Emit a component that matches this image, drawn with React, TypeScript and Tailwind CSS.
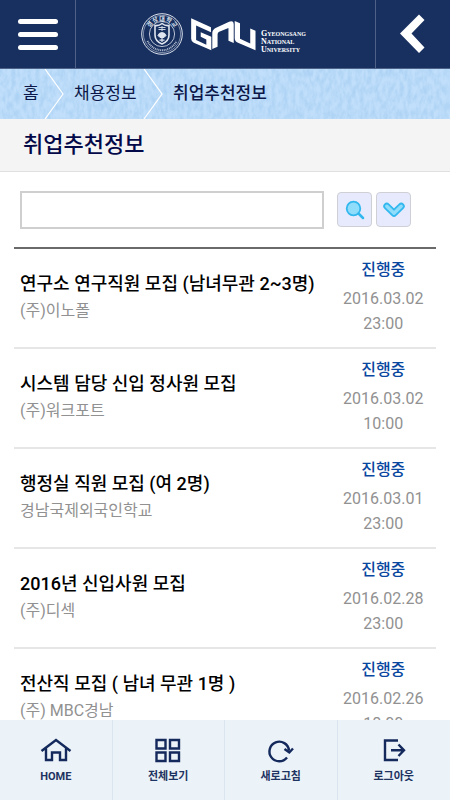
import React from "react";

type Job = { title: string; company: string; date: string; time: string };

const jobs: Job[] = [
  { title: "연구소 연구직원 모집 (남녀무관 2~3명)", company: "(주)이노폴", date: "2016.03.02", time: "23:00" },
  { title: "시스템 담당 신입 정사원 모집", company: "(주)워크포트", date: "2016.03.02", time: "10:00" },
  { title: "행정실 직원 모집 (여 2명)", company: "경남국제외국인학교", date: "2016.03.01", time: "23:00" },
  { title: "2016년 신입사원 모집", company: "(주)디섹", date: "2016.02.28", time: "23:00" },
  { title: "전산직 모집 ( 남녀 무관 1명 )", company: "(주) MBC경남", date: "2016.02.26", time: "18:00" },
];

function Seal() {
  return (
    <svg viewBox="0 0 42 42" className="h-[42px] w-[42px]" fill="none" stroke="#dfe5f0" aria-hidden="true">
      <circle cx="21" cy="21" r="20.3" strokeWidth="1" />
      <circle cx="21" cy="21" r="18.6" strokeWidth="0.5" />
      <circle cx="21" cy="21" r="12.6" strokeWidth="0.8" />
      <path d="M6.5 28A16 16 0 0 0 35.5 28" strokeWidth="2" strokeDasharray="1 0.8" opacity="0.8" />
      <path d="M14 12.5Q18 13 21 10.5Q24 13 28 12.5V22Q28 28 21 31Q14 28 14 22Z" strokeWidth="1.6" />
      <path d="M17.5 14.5h7M17.5 16.5h7M21 13v5" strokeWidth="0.9" />
      <path d="M17 22.5A4.2 4.2 0 0 1 25 22.5L23 24.5H19Z" fill="#dfe5f0" strokeWidth="1" />
      <path d="M21 24v5M18.5 27.2h5" strokeWidth="1.2" />
      <g fill="#dfe5f0" stroke="none" fontSize="6" fontWeight="700" fontFamily="Noto Sans CJK KR, sans-serif" textAnchor="middle">
        <text transform="rotate(-52 21 21)" x="21" y="7.5">경</text>
        <text transform="rotate(-26 21 21)" x="21" y="7.5">상</text>
        <text x="21" y="7.5">대</text>
        <text transform="rotate(26 21 21)" x="21" y="7.5">학</text>
        <text transform="rotate(52 21 21)" x="21" y="7.5">교</text>
      </g>
    </svg>
  );
}

function Wordmark() {
  return (
    <svg viewBox="183 56 196 100" className="h-[33px] w-[65px]" fill="#fff" aria-hidden="true">
      <path d="M183 57L243 84V99L198 79V123L229 137V121L212 113V99L244 113V154L191 131Q183 127 183 119Z" />
      <path d="M247 150V102Q247 91 257 86L298 67Q312 62 312 76V132L296 125V86L268 98Q263 100 263 106V143Z" />
      <path d="M315 65L331 72V119L362 133V88L378 95V154L325 131Q315 127 315 117Z" />
    </svg>
  );
}

function Separator() {
  return (
    <svg viewBox="0 0 20 50" className="h-[50px] w-5 shrink-0" fill="none" stroke="#fff" strokeWidth="1.2" aria-hidden="true">
      <path d="M1 0L19 25L1 50" />
    </svg>
  );
}

function PaperTexture() {
  return (
    <svg className="absolute inset-0 h-full w-full" aria-hidden="true">
      <filter id="paper" x="0" y="0" width="100%" height="100%" colorInterpolationFilters="sRGB">
        <feTurbulence type="fractalNoise" baseFrequency="0.25 0.12" numOctaves="3" seed="4" />
        <feColorMatrix values="0 0 0 0 0.58  0 0 0 0 0.76  0 0 0 0 0.92  0.9 0 0 0 -0.28" />
      </filter>
      <rect width="100%" height="100%" filter="url(#paper)" />
    </svg>
  );
}

const navItems = [
  { label: "HOME", icon: <path d="M1.5 14L16 3L30.5 14M6 11.5V23H12V15.5H20V23H26V11.5" /> },
  { label: "전체보기", icon: <path d="M4.5 3h9v8.5h-9zM18 3h9v8.5h-9zM4.5 15.5h9v8.5h-9zM18 15.5h9v8.5h-9z" /> },
  { label: "새로고침", icon: <path d="M22 20.5A9.8 9.8 0 1 1 24 13.5M19.5 12L24.3 15.5L28 11.5" /> },
  { label: "로그아웃", icon: <path d="M20 3.5H7V23H20M13 13.3H26M20.5 7.5L26 13.3L20.5 19" /> },
];

export default function App() {
  return (
    <div className="flex h-screen flex-col overflow-hidden bg-white font-[Roboto,'Noto_Sans_CJK_KR',sans-serif]">
      <header className="flex h-[69px] shrink-0 border-b border-[#4c6288] bg-[#18305f]">
        <button type="button" aria-label="메뉴" className="flex w-[76px] flex-col items-center justify-center gap-2 border-r border-[#4f6186]">
          <span className="h-[5px] w-10 rounded-full bg-white" />
          <span className="h-[5px] w-10 rounded-full bg-white" />
          <span className="h-[5px] w-10 rounded-full bg-white" />
        </button>
        <a href="#" aria-label="Gyeongsang National University" className="flex flex-1 items-center justify-center pr-[3px]">
          <Seal />
          <span className="ml-2">
            <Wordmark />
          </span>
          <span className="ml-[5px] mt-4 w-[46px] whitespace-nowrap font-['Liberation_Serif',serif] text-[8px] font-bold leading-[8px] text-white [font-variant:small-caps]">
            <span className="block">Gyeongsang</span>
            <span className="block">National</span>
            <span className="block">University</span>
          </span>
        </a>
        <button type="button" aria-label="뒤로" className="flex w-[75px] items-center justify-center border-l border-[#4f6186]">
          <svg viewBox="0 0 26 40" className="h-10 w-[26px]" fill="#fff" aria-hidden="true">
            <path d="M19 0.5L24.5 6L11.5 19.5L24.5 33.5L19 39L0 19.5Z" />
          </svg>
        </button>
      </header>

      <nav aria-label="현재 위치" className="relative h-[50px] shrink-0 bg-[#c1dffb]">
        <PaperTexture />
        <div className="relative flex h-full items-center text-[17px] leading-6 text-[#0b1748]">
          <a href="#" className="w-11 pb-[2px] pl-[23px]">홈</a>
          <Separator />
          <a href="#" className="w-[79px] whitespace-nowrap pb-[2px] pl-[10px]">채용정보</a>
          <Separator />
          <a href="#" aria-current="page" className="pb-[2px] pl-[10px] font-medium">취업추천정보</a>
        </div>
      </nav>

      <h1 className="flex h-[53px] shrink-0 items-center border-b border-[#e0e0e0] bg-[#f4f4f4] pb-[2px] pl-[23px] text-[22px] font-medium text-[#04094a]">
        취업추천정보
      </h1>

      <main className="min-h-0 flex-1 overflow-y-auto px-[14px] [scrollbar-width:none]">
        <form className="flex h-[75px] items-center pl-[6px] pr-[25px]">
          <input type="text" aria-label="검색어" className="h-[38px] min-w-0 flex-1 border-2 border-[#cfcfcf] px-2 text-base" />
          <button type="button" aria-label="검색" className="ml-[13px] flex h-[35px] w-[35px] items-center justify-center rounded border border-[#cfd0d6] bg-[#e6eafc]">
            <svg viewBox="0 0 20 20" className="h-5 w-5" fill="#8fdcfb" stroke="#32b8ee" strokeWidth="1.8" aria-hidden="true">
              <circle cx="8.5" cy="8.5" r="6.8" />
              <path d="M13.5 13.5L18 18" strokeWidth="2.5" strokeLinecap="round" />
            </svg>
          </button>
          <button type="button" aria-label="펼치기" className="ml-1 flex h-[35px] w-[35px] items-center justify-center rounded border border-[#cfd0d6] bg-[#e6eafc]">
            <svg viewBox="0 0 22 16" className="h-4 w-[22px] shrink-0" fill="none" strokeLinecap="round" strokeLinejoin="round" aria-hidden="true">
              <path d="M3.8 4.2L11 11.2L18.2 4.2" stroke="#32b8ee" strokeWidth="7" />
              <path d="M3.8 4.2L11 11.2L18.2 4.2" stroke="#8fdcfb" strokeWidth="3.4" />
            </svg>
          </button>
        </form>

        <table aria-label="취업추천정보" className="w-full table-fixed border-collapse border-t-2 border-[#6a6a6a]">
          <tbody>
            {jobs.map((job) => (
              <tr key={job.title} className="h-[100px] border-b-2 border-[#e6e6e6]">
                <td className="w-3/4 pb-[2px] pl-[6px]">
                  <a href="#" className="block whitespace-nowrap text-lg font-medium leading-[27px] text-black">{job.title}</a>
                  <p className="text-base leading-[27px] text-[#919191]">{job.company}</p>
                </td>
                <td className="w-1/4 pb-1 text-center text-base leading-[25px]">
                  <p className="pb-1 font-medium text-[#0a479f]">진행중</p>
                  <p className="text-[#919191]">{job.date}</p>
                  <p className="text-[#919191]">{job.time}</p>
                </td>
              </tr>
            ))}
          </tbody>
        </table>
      </main>

      <nav aria-label="하단 메뉴" className="grid h-20 shrink-0 grid-cols-4 divide-x divide-[#dbe5f0] bg-[#ebf2f8]">
        {navItems.map((item) => (
          <a key={item.label} href="#" className="flex flex-col items-center pt-[17px] text-[11px] font-bold leading-4 text-[#1d3361]">
            <svg viewBox="0 0 32 27" className="mb-[5px] h-[27px] w-8" fill="none" stroke="#14295c" strokeWidth="2.4" aria-hidden="true">
              {item.icon}
            </svg>
            {item.label}
          </a>
        ))}
      </nav>
    </div>
  );
}
